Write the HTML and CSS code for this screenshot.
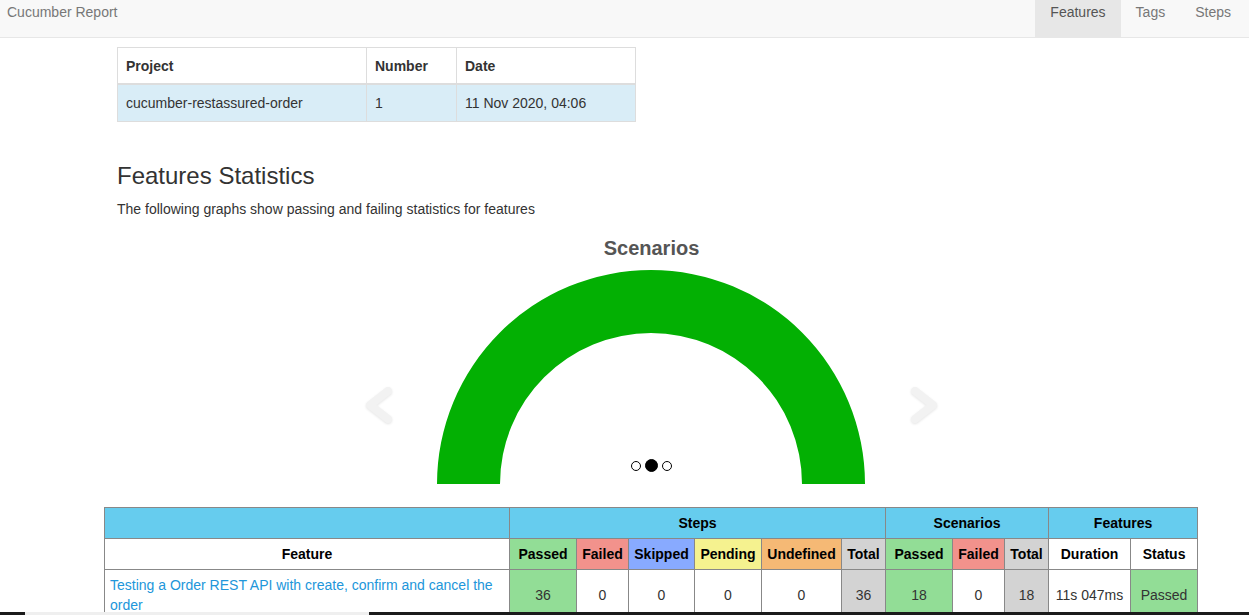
FILE: index.html
```html
<!DOCTYPE html>
<html lang="en">
<head>
<meta charset="utf-8">
<title>Cucumber Report</title>
<link rel="stylesheet" href="styles.css">
</head>
<body>
<nav class="navbar">
  <a class="brand" href="#">Cucumber Report</a>
  <ul class="nav">
    <li><a class="nav-link active" href="#">Features</a></li>
    <li><a class="nav-link" href="#">Tags</a></li>
    <li><a class="nav-link" href="#">Steps</a></li>
  </ul>
</nav>

<main class="page">
  <table class="info">
    <colgroup>
      <col class="i-project"><col class="i-number"><col class="i-date">
    </colgroup>
    <thead>
      <tr><th>Project</th><th>Number</th><th>Date</th></tr>
    </thead>
    <tbody>
      <tr class="row-info"><td>cucumber-restassured-order</td><td>1</td><td>11 Nov 2020, 04:06</td></tr>
    </tbody>
  </table>

  <section class="stats">
    <h2 class="stats-title">Features Statistics</h2>
    <p class="stats-text">The following graphs show passing and failing statistics for features</p>
  </section>

  <div class="carousel">
    <div class="chart-title">Scenarios</div>
    <svg class="chart" width="430" height="226" viewBox="0 0 430 226">
      <path d="M 1 224 A 214 214 0 0 1 429 224 L 366 224 A 151 151 0 0 0 64 224 Z" fill="#03b003"/>
    </svg>
    <svg class="arrow arrow-left" width="34" height="44" viewBox="0 0 34 44">
      <polyline points="26,8 8,22 26,36" fill="none" stroke="#f2f2f2" stroke-width="8" stroke-linecap="round" stroke-linejoin="round"/>
    </svg>
    <svg class="arrow arrow-right" width="34" height="44" viewBox="0 0 34 44">
      <polyline points="8,8 26,22 8,36" fill="none" stroke="#f2f2f2" stroke-width="8" stroke-linecap="round" stroke-linejoin="round"/>
    </svg>
    <ol class="dots">
      <li class="dot"></li>
      <li class="dot dot-active"></li>
      <li class="dot"></li>
    </ol>
  </div>

  <table class="report">
    <colgroup>
      <col class="c-feature"><col class="c-passed"><col class="c-failed"><col class="c-skipped"><col class="c-pending"><col class="c-undefined"><col class="c-total"><col class="c-spassed"><col class="c-sfailed"><col class="c-stotal"><col class="c-duration"><col class="c-status">
    </colgroup>
    <thead>
      <tr class="group-row">
        <th></th>
        <th colspan="6">Steps</th>
        <th colspan="3">Scenarios</th>
        <th colspan="2">Features</th>
      </tr>
      <tr class="head-row">
        <th>Feature</th>
        <th class="passed">Passed</th>
        <th class="failed">Failed</th>
        <th class="skipped">Skipped</th>
        <th class="pending">Pending</th>
        <th class="undefined">Undefined</th>
        <th class="total">Total</th>
        <th class="passed">Passed</th>
        <th class="failed">Failed</th>
        <th class="total">Total</th>
        <th>Duration</th>
        <th>Status</th>
      </tr>
    </thead>
    <tbody>
      <tr>
        <td class="feature-name"><a href="#">Testing a Order REST API with create, confirm and cancel the order</a></td>
        <td class="passed">36</td>
        <td>0</td>
        <td>0</td>
        <td>0</td>
        <td>0</td>
        <td class="total">36</td>
        <td class="passed">18</td>
        <td>0</td>
        <td class="total">18</td>
        <td>11s 047ms</td>
        <td class="passed">Passed</td>
      </tr>
    </tbody>
  </table>
</main>

<div class="hscroll"><div class="hscroll-thumb"></div></div>
</body>
</html>
```

FILE: styles.css
```css
html {
  overflow: hidden;
}

body {
  margin: 0;
  font-family: "Liberation Sans", Arial, sans-serif;
  font-size: 14px;
  line-height: 20px;
  color: #333;
  background: #fff;
}

a {
  text-decoration: none;
}

/* Navbar */
.navbar {
  display: flex;
  justify-content: space-between;
  align-items: flex-start;
  height: 37px;
  background: #f8f8f8;
  border-bottom: 1px solid #e7e7e7;
}

.brand {
  padding: 2px 7px;
  font-size: 14px;
  line-height: 20px;
  color: #777;
}

.nav {
  display: flex;
  margin: 0 3px 0 0;
  padding: 0;
  list-style: none;
}

.nav-link {
  display: block;
  height: 37px;
  box-sizing: border-box;
  padding: 2px 15px 15px;
  color: #777;
  line-height: 20px;
}

.nav-link.active {
  background: #e7e7e7;
  color: #555;
}

/* Page */
.page {
  margin: 0 52px 0 104px;
}

/* Info table */
.info {
  margin: 9px 0 0 13px;
  width: 518px;
  border-collapse: collapse;
  table-layout: fixed;
}

.i-project { width: 249px; }
.i-number { width: 90px; }
.i-date { width: 179px; }

.info th,
.info td {
  padding: 8px 8px;
  border: 1px solid #ddd;
  text-align: left;
  line-height: 20px;
}

.info th {
  font-weight: bold;
  padding-bottom: 7px;
  border-bottom-width: 2px;
}

.row-info td {
  background: #d9edf7;
}

/* Stats */
.stats {
  margin-left: 13px;
}

.stats-title {
  margin: 41px 0 10px;
  font-size: 24px;
  font-weight: normal;
  line-height: 1.1;
  color: #333;
}

.stats-text {
  margin: 0;
}

/* Carousel */
.carousel {
  position: relative;
  margin-top: 17px;
  display: flex;
  flex-direction: column;
  align-items: center;
}

.chart-title {
  font-size: 20px;
  font-weight: bold;
  line-height: 24px;
  color: #555;
  padding-left: 2px;
}

.chart {
  display: block;
}

.arrow {
  position: absolute;
  top: 147px;
  filter: drop-shadow(0 1px 1px rgba(0, 0, 0, 0.1));
}

.arrow-left { left: 258px; }
.arrow-right { left: 803px; }

.dots {
  position: absolute;
  bottom: 14px;
  left: 0;
  right: 0;
  margin: 0;
  padding: 0 0 0 2px;
  list-style: none;
  display: flex;
  justify-content: center;
  align-items: center;
  gap: 4px;
}

.dot {
  width: 10px;
  height: 10px;
  box-sizing: border-box;
  border: 1px solid #000;
  border-radius: 50%;
  background: #fff;
}

.dot-active {
  width: 13px;
  height: 13px;
  background: #000;
}

/* Report table */
.report {
  margin-top: 21px;
  width: 1093px;
  border-collapse: collapse;
  table-layout: fixed;
}

.c-feature { width: 405px; }
.c-passed { width: 67px; }
.c-failed { width: 52px; }
.c-skipped { width: 66px; }
.c-pending { width: 67px; }
.c-undefined { width: 80px; }
.c-total { width: 44px; }
.c-spassed { width: 67px; }
.c-sfailed { width: 52px; }
.c-stotal { width: 44px; }
.c-duration { width: 82px; }
.c-status { width: 67px; }

.report th,
.report td {
  border: 1px solid #888;
  padding: 5px 5px;
  line-height: 20px;
  text-align: center;
  vertical-align: middle;
}

.report th {
  font-weight: bold;
  color: #000;
  padding: 5px 2px;
}

.group-row th {
  background: #66ccee;
}

.head-row th {
  background: #fff;
}

.report td {
  color: #333;
}

.report .feature-name {
  text-align: left;
}

.feature-name a {
  color: #2196da;
}

.report .passed { background: #92dd96; }
.report .failed { background: #f2928c; }
.report .skipped { background: #88aaff; }
.report .pending { background: #f5f28f; }
.report .undefined { background: #f5b975; }
.report .total { background: #d3d3d3; }

/* Bottom scroll strip */
.hscroll {
  position: fixed;
  left: 0;
  right: 0;
  bottom: 0;
  height: 3px;
  background: #1b1b1b;
}

.hscroll-thumb {
  margin-left: 25px;
  width: 344px;
  height: 3px;
  background: #efefef;
}
```
